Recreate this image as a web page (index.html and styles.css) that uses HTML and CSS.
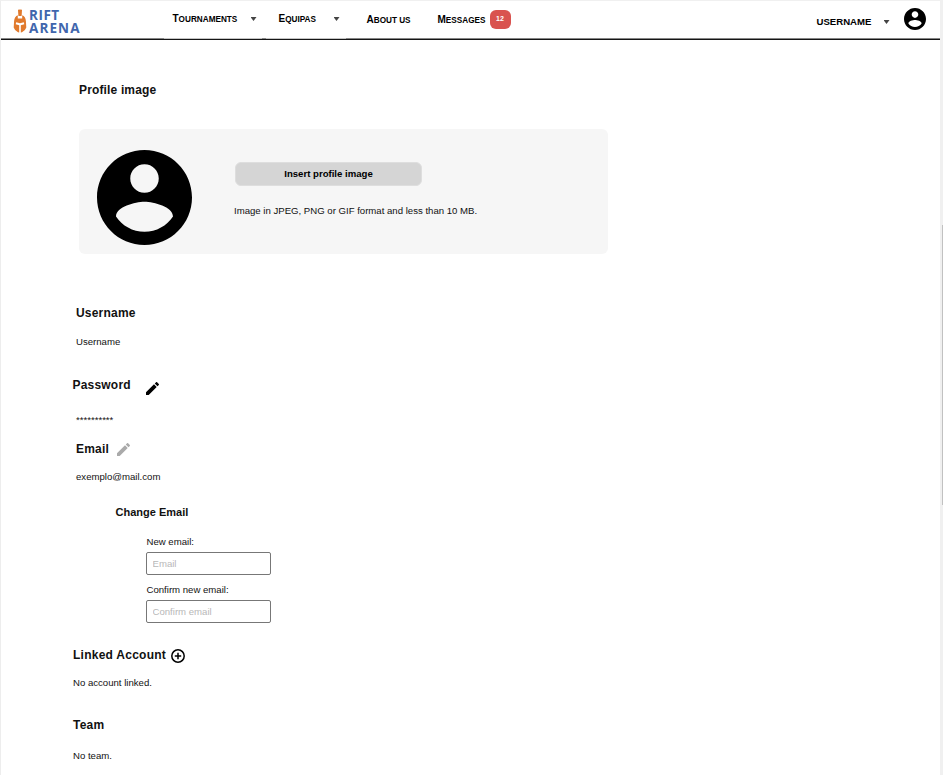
FILE: index.html
```html
<!DOCTYPE html>
<html lang="en">
<head>
<meta charset="utf-8">
<title>Rift Arena - Profile</title>
<link rel="stylesheet" href="styles.css">
</head>
<body>
<div class="page">
  <header class="topbar">
    <div class="logo">
      <svg class="logo-mark" viewBox="0 0 14 24"><path fill="#e17a2d" d="M5 .8Q7 0 9 .8L8.600 7H5.400Z"/><path fill="#e17a2d" d="M4.800 6.200V9.500H9.200V6.200Q12.500 7.500 12.900 12L13.300 18.500Q12.500 21.500 9 23.200L7.800 23.600V16.300L11.300 15.300L10.800 13.200L7 14.300L3.200 13.200L2.700 15.300L6.200 16.300V23.600L5 23.200Q1.500 21.500.7 18.500L1.100 12Q1.500 7.500 4.800 6.200Z"/></svg>
      <div class="logo-text"><span>RIFT</span><span>ARENA</span></div>
    </div>
    <nav class="nav">
      <a class="nav-link tournaments">Tournaments</a><i class="caret"></i>
      <a class="nav-link teams">Equipas</a><i class="caret"></i>
      <a class="nav-link about">About us</a>
      <a class="nav-link messages">Messages</a><span class="badge">12</span>
    </nav>
    <div class="account">
      <span>USERNAME</span><i class="caret"></i>
      <svg class="account-icon" viewBox="2 2 20 20"><path d="M12 2C6.480 2 2 6.480 2 12s4.480 10 10 10 10-4.480 10-10S17.520 2 12 2zm0 3c1.660 0 3 1.340 3 3s-1.340 3-3 3-3-1.340-3-3 1.340-3 3-3zm0 14.200c-2.500 0-4.710-1.280-6-3.220.03-1.990 4-3.080 6-3.080 1.990 0 5.970 1.090 6 3.080-1.290 1.940-3.500 3.220-6 3.220z"/></svg>
    </div>
  </header>
  <main>
    <h2 class="image-title">Profile image</h2>
    <section class="image-card">
      <svg class="avatar" viewBox="2 2 20 20"><path d="M12 2C6.480 2 2 6.480 2 12s4.480 10 10 10 10-4.480 10-10S17.520 2 12 2zm0 3c1.660 0 3 1.340 3 3s-1.340 3-3 3-3-1.340-3-3 1.340-3 3-3zm0 14.200c-2.500 0-4.710-1.280-6-3.220.03-1.990 4-3.080 6-3.080 1.990 0 5.970 1.090 6 3.080-1.290 1.940-3.500 3.220-6 3.220z"/></svg>
      <div class="upload">
        <button>Insert profile image</button>
        <p>Image in JPEG, PNG or GIF format and less than 10 MB.</p>
      </div>
    </section>
    <section class="field username">
      <h2>Username</h2>
      <p>Username</p>
    </section>
    <section class="field password">
      <h2>Password <svg class="pencil" viewBox="3 3 18 18"><path d="M3 17.250V21h3.750L17.810 9.940l-3.750-3.750L3 17.250zM20.710 7.040a1 1 0 0 0 0-1.410l-2.340-2.340a1 1 0 0 0-1.410 0l-1.830 1.830 3.750 3.750 1.830-1.830z"/></svg></h2>
      <p>**********</p>
    </section>
    <section class="field email">
      <h2>Email <svg class="pencil" viewBox="3 3 18 18"><path d="M3 17.250V21h3.750L17.810 9.940l-3.750-3.750L3 17.250zM20.710 7.040a1 1 0 0 0 0-1.410l-2.340-2.340a1 1 0 0 0-1.410 0l-1.830 1.830 3.750 3.750 1.830-1.830z"/></svg></h2>
      <p>exemplo@mail.com</p>
    </section>
    <form class="change-email">
      <h3>Change Email</h3>
      <label for="new-email">New email:</label>
      <input id="new-email" type="text" placeholder="Email">
      <label for="confirm-email">Confirm new email:</label>
      <input id="confirm-email" type="text" placeholder="Confirm email">
    </form>
    <section class="field linked">
      <h2>Linked Account <svg class="plus" viewBox="0 0 14 14"><circle cx="7" cy="7" r="6.200"/><path d="M7 3.800V10.200M3.800 7H10.200"/></svg></h2>
      <p>No account linked.</p>
    </section>
    <section class="field team">
      <h2>Team</h2>
      <p>No team.</p>
    </section>
  </main>
</div>
<aside class="scrollbar"><div class="thumb"></div></aside>
</body>
</html>
```
FILE: styles.css
```css
* { box-sizing: border-box; }
body {
  margin: 0;
  height: 775px;
  display: flex;
  overflow: hidden;
  background: #fff;
  color: #111;
  font: 9.6px/12px "Liberation Sans", Arial, sans-serif;
}
h2, h3, p { margin: 0; }
.page {
  width: 940px;
  border-top: 1px solid #f0f0f0;
  border-left: 1px solid #ededed;
}
.scrollbar {
  width: 3px;
  padding: 225px 0 0 2px;
  background: #f0f0f0;
}
.thumb { height: 280px; background: #c1c1c1; }

.topbar {
  display: flex;
  height: 39px;
  border-bottom: 1px solid #151515;
  background: linear-gradient(90deg, #858585 163px, #c4c4c4 163px 261px, #858585 261px 265px, #c4c4c4 265px 345px, #858585 345px) bottom / 100% 1px no-repeat;
  color: #000;
  font-weight: bold;
}
.logo { display: flex; width: 171.500px; padding: 8px 0 0 12px; }
.logo-mark { width: 14px; height: 24px; }
.logo-text {
  display: flex;
  flex-direction: column;
  margin-left: 2px;
  color: #4166ad;
  font: bold 13.5px/13px "Open Sans", sans-serif;
  letter-spacing: 1.1px;
}
.logo-text span:first-child { letter-spacing: .5px; }
.nav { display: flex; align-items: flex-start; width: 644px; padding-top: 12px; }
.nav-link {
  display: block;
  font-size: 8.2px;
  line-height: 12px;
  text-transform: uppercase;
  white-space: nowrap;
}
.nav-link::first-letter { font-size: 10px; }
.tournaments { width: 78px; }
.teams { width: 55px; margin-left: 22px; }
.about { width: 71px; margin: 1px 0 0 27px; }
.messages { width: 52px; margin-top: 1px; }
.caret {
  width: 6px;
  height: 4px;
  margin-top: 4px;
  background: #444;
  clip-path: polygon(0 0, 100% 0, 50% 100%);
}
.badge {
  width: 21px;
  height: 19px;
  margin-top: -3px;
  border-radius: 6px;
  background: #d9534f;
  color: #fff;
  font-size: 7px;
  line-height: 18px;
  text-align: center;
}
.account { display: flex; align-items: flex-start; padding-top: 15px; }
.account span { width: 67px; }
.account-icon { width: 22px; height: 22px; margin: -8px 0 0 14px; }

main { display: flow-root; }
h2 { font-size: 12px; line-height: 16px; letter-spacing: .2px; }
.image-title { margin: 42px 0 0 78px; letter-spacing: .15px; }
.image-card {
  display: flex;
  width: 529px;
  height: 125px;
  margin: 31px 0 0 78px;
  padding: 21px 0 0 18px;
  border-radius: 6px;
  background: #f6f6f6;
}
.avatar { width: 95px; height: 95px; }
.upload { margin: 12px 0 0 42px; }
.upload button {
  display: block;
  width: 187px;
  height: 24px;
  margin-left: 1px;
  padding: 0 0 1px;
  border: 1px solid #dedede;
  border-radius: 6px;
  background: #d5d5d5;
  color: #000;
  font: bold 9.6px/20px "Liberation Sans", sans-serif;
}
.upload p { margin-top: 19px; }

.field h2 { display: flex; }
.username { margin: 51px 0 0 75px; }
.username p { margin-top: 15px; }
.password { margin: 29px 0 0 71.500px; }
.password p { margin: 19px 0 0 3.500px; }
.pencil { width: 13px; height: 13px; margin: 5px 0 0 15.500px; }
.email { margin: 15px 0 0 75px; }
.email p { margin-top: 14px; }
.email .pencil { margin: 2px 0 0 8px; fill: #aaa; }

.change-email { margin: 21px 0 0 114.500px; }
.change-email h3 { font-size: 11px; line-height: 16px; }
.change-email label { display: block; margin: 16px 0 0 31px; }
.change-email input {
  display: block;
  width: 125px;
  height: 23px;
  margin: 4px 0 0 30.500px;
  padding: 0 5.500px;
  border: 1px solid #777;
  border-radius: 2px;
  font: 9.6px "Liberation Sans", sans-serif;
}
.change-email input + label { margin-top: 9px; }
::placeholder { color: #b8b8b8; opacity: 1; }

.linked { margin: 24px 0 0 72px; }
.linked h2 { letter-spacing: .25px; }
.linked p { margin-top: 14px; }
.plus {
  width: 14px;
  height: 14px;
  margin: 2px 0 0 5px;
  fill: none;
  stroke: #000;
  stroke-width: 1.5;
}
.team { margin: 28px 0 0 72px; }
.team p { margin-top: 17px; }
```
